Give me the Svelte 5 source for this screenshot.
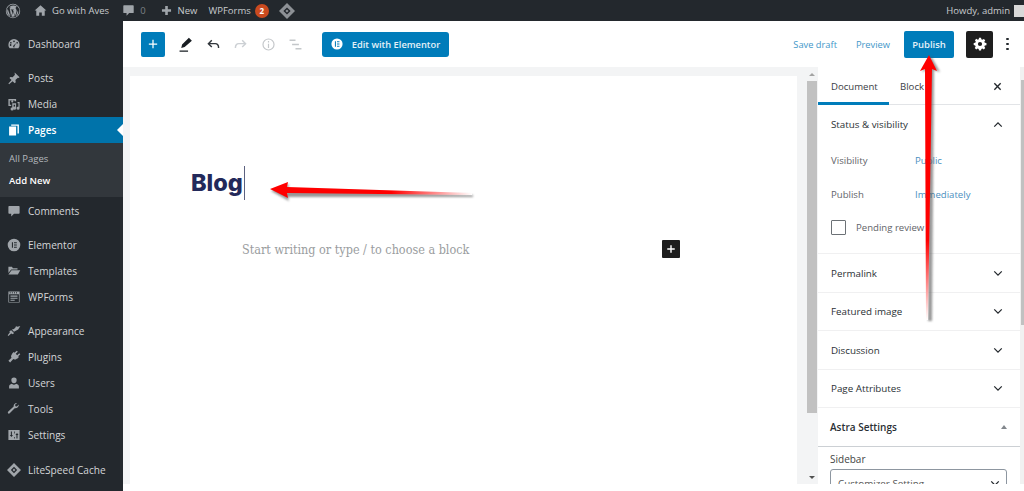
<script lang="ts">
    const groups = [
        [{ name: "Dashboard", icon: "dash" }],
        [
            { name: "Posts", icon: "pin" },
            { name: "Media", icon: "media" },
        ],
        [
            { name: "Comments", icon: "comment" },
        ],
        [
            { name: "Elementor", icon: "elementor" },
            { name: "Templates", icon: "folder" },
            { name: "WPForms", icon: "forms" },
        ],
        [
            { name: "Appearance", icon: "brush" },
            { name: "Plugins", icon: "plug" },
            { name: "Users", icon: "user" },
            { name: "Tools", icon: "wrench" },
            { name: "Settings", icon: "settings" },
        ],
        [{ name: "LiteSpeed Cache", icon: "diamond" }],
    ];

    const collapsed = [
        { name: "Permalink" },
        { name: "Featured image" },
        { name: "Discussion" },
        { name: "Page Attributes" },
    ];
</script>

{#snippet menuIcon(icon)}
    <svg class="menu-icon" viewBox="0 0 20 20" fill="#a0a5aa">
        {#if icon === "dash"}
            <path d="M10 3a8 8 0 0 0-8 8c0 2 .7 3.800 1.900 5.200h12.200A8 8 0 0 0 18 11a8 8 0 0 0-8-8zm0 2a1.200 1.200 0 1 1 0 2.400A1.200 1.200 0 0 1 10 5zM5.500 7a1.200 1.200 0 1 1 0 2.400 1.200 1.200 0 0 1 0-2.400zm9 0a1.200 1.200 0 1 1 0 2.400 1.200 1.200 0 0 1 0-2.400zM4 11.500a1.200 1.200 0 1 1 0 .01zm6.500 3.500a1.700 1.700 0 0 1-1.500-2.500l4-4-2.500 5a1.700 1.700 0 0 1 0 1.500z" />
        {:else if icon === "pin"}
            <path d="M11 2l7 7-1.500 1-1-.5-3.500 3.500.5 3-1.500 1.500-3-3-5 4.500-1-1 4.500-5-3-3L5 8.500l3 .5 3.500-3.500-.5-1z" />
        {:else if icon === "media"}
            <path d="M2 3h11v3h-2V5H4v6h2v2H2zM6 6.500a1.500 1.500 0 1 1 3 0 1.500 1.500 0 0 1-3 0zM15 7h3v9a2.200 2.200 0 1 1-1.600-2.100V9H15zM7.500 9H13v7a2.200 2.200 0 1 1-1.500-2.100V11h-2v6a2.200 2.200 0 1 1-2-2.100z" />
        {:else if icon === "comment"}
            <path d="M3 3h14a1 1 0 0 1 1 1v9a1 1 0 0 1-1 1h-7l-4 4v-4H3a1 1 0 0 1-1-1V4a1 1 0 0 1 1-1z" />
        {:else if icon === "elementor"}
            <path fill-rule="evenodd" d="M10 1a9 9 0 1 1 0 18 9 9 0 0 1 0-18zM7 6v8h1.500V6zm3 0v1.500h4V6zm0 3.300v1.500h4V9.300zm0 3.200V14h4v-1.500z" />
        {:else if icon === "folder"}
            <path d="M2 4h5l1.500 2H15v2H6L2 13zM6.500 9H19l-3.500 6H2z" />
        {:else if icon === "forms"}
            <path fill-rule="evenodd" d="M2 2h16v16H2zM3 6v11h14V6zM4 3v2h1V3zm3 0v2h1V3zm3 0v2h1V3zm3 0v2h1V3zM5 8h10v1.500H5zm0 3h10v1.500H5zm0 3h6v1.500H5z" />
        {:else if icon === "brush"}
            <path d="M19 3l-3 5-6 3-3-3 3-1 3-3-1-1 3 1zM6 9l4 4-1.500 1.500L6 13.500 2 17l-1-1 3-4-.5-1.500z" />
        {:else if icon === "plug"}
            <path d="M14 1l1.500 1.500-3 3 2 2 3-3L19 6l-3 3 1 1-2 2-1 .5c-2 1.500-4 1.500-5 .5l-4.500 5L2 15.500l4.500-4.500c-1-1-1-3 .5-5l.5-1 2-2 1 1z" />
        {:else if icon === "user"}
            <path d="M10 2a3.800 3.800 0 0 1 3.800 4c0 2.200-1.700 4.500-3.800 4.500S6.200 8.200 6.200 6A3.800 3.800 0 0 1 10 2zM3 15c0-2 1.500-3.500 4-4 1 1 2 1.500 3 1.500s2-.5 3-1.500c2.500.5 4 2 4 4v3H3z" />
        {:else if icon === "wrench"}
            <path d="M17 3.500l-3 3-2-.5-.5-2 3-2.500c-2.500-.5-5.500 1.500-5 5l-8 7.500c-1 1 .5 3.500 2 2.500L11 9c3 .5 6-2 6-5.500z" />
        {:else if icon === "settings"}
            <path fill-rule="evenodd" d="M2 3h16v14H2zM5.500 5v5H4l2.300 3 2.200-3H7V5zM13.500 15v-5H12l2.300-3 2.200 3H15v5zM10 13h1v2h-1zM10 5h1v3h-1z" />
        {:else if icon === "diamond"}
            <path fill-rule="evenodd" d="M10 0l10 10-10 10L0 10zM10 5.500L5.500 10l4.500 4.500 4.500-4.500z" />
            <path d="M10 8l2 2-2 2-2-2z" />
        {/if}
    </svg>
{/snippet}

{#snippet chevron(up)}
    <svg class="chevron" viewBox="0 0 12 8" fill="none" stroke="#23282d" stroke-width="1.500">
        {#if up}
            <path d="M1.500 6.500 6 2l4.500 4.500" />
        {:else}
            <path d="M1.500 1.500 6 6l4.500-4.500" />
        {/if}
    </svg>
{/snippet}

<div class="page">
    <header class="adminbar">
        <svg class="wp-logo" viewBox="0 0 20 20" fill="#a0a5aa">
            <path fill-rule="evenodd" d="M10 1a9 9 0 1 1 0 18 9 9 0 0 1 0-18zm0 1a8 8 0 1 0 0 16 8 8 0 0 0 0-16zM3.300 7.200l3.400 9.400a7.300 7.300 0 0 1-3.400-9.400zm12.600 1.800c.3.800.6 1.500.6 2.500 0 1-.5 2.300-1 3.200l-2 2.200 2-6c.4-1 .6-1.800.4-1.900zM5.200 5.200a7.300 7.300 0 0 1 9.900-.5c-1-.1-1.800.7-1.800 1.600 0 1 1.300 2.300 1.300 3.500 0 1-.5 2-1 3.500l-1 3-2.600-7.500.9-.1v-.7l-3.800.2v.6l.9.1 1.100 3.200-1.600 4.600L5.900 6.500l.9-.1v-.7zM10.200 11l2 5.700a7.300 7.300 0 0 1-4.100.1z" />
        </svg>
        <span class="bar-item site">
            <svg viewBox="0 0 20 20" fill="#a0a5aa"><path d="M10 2l9 8h-2.500v8h-4.500v-5H8v5H3.500v-8H1z" /></svg>
            Go with Aves
        </span>
        <span class="bar-item comments">
            <svg viewBox="0 0 20 20" fill="#a0a5aa"><path d="M3 2h14a1 1 0 0 1 1 1v10a1 1 0 0 1-1 1h-6l-4 4v-4H3a1 1 0 0 1-1-1V3a1 1 0 0 1 1-1z" /></svg>
            <span class="count">0</span>
        </span>
        <span class="bar-item new">
            <svg viewBox="0 0 20 20" fill="#a0a5aa"><path d="M8 3h4v5h5v4h-5v5H8v-5H3V8h5z" /></svg>
            New
        </span>
        <span class="bar-item forms">WPForms <span class="badge">2</span></span>
        <svg class="bar-diamond" viewBox="0 0 20 20" fill="#8d9196">
            <path fill-rule="evenodd" d="M10 0l10 10-10 10L0 10zM10 5.500L5.500 10l4.500 4.500 4.500-4.500z" />
            <path d="M10 8l2 2-2 2-2-2z" />
        </svg>
        <span class="howdy">Howdy, admin <span class="avatar"></span></span>
    </header>

    <div class="body">
        <nav class="sidebar">
            {#each groups as group, i}
                <ul class="menu-group">
                    {#each group as item}
                        <li class="menu-item">
                            {@render menuIcon(item.icon)}
                            <span>{item.name}</span>
                        </li>
                    {/each}
                    {#if i === 1}
                        <li class="menu-item current">
                            <svg class="menu-icon" viewBox="0 0 20 20" fill="#fff">
                                <path d="M6 2h11v13h-2V4H6zM3 5h10v13H3z" />
                            </svg>
                            <span>Pages</span>
                        </li>
                        <li class="submenu">
                            <span>All Pages</span>
                            <span class="active">Add New</span>
                        </li>
                    {/if}
                </ul>
            {/each}
        </nav>

        <main class="editor">
            <div class="toolbar">
                <div class="tools">
                    <button class="inserter" aria-label="Add block">
                        <svg viewBox="0 0 12 12" fill="none" stroke="#fff" stroke-width="1.500"><path d="M6 1v10M1 6h10" /></svg>
                    </button>
                    <svg class="tool" viewBox="0 0 20 20" fill="#191e23"><path d="M14 2l3.500 3.500L9 13l-4 1 1-4zM3 17h10v1.500H3z" /></svg>
                    <svg class="tool" viewBox="0 0 20 20" fill="none" stroke="#32373c" stroke-width="1.700"><path d="M8 5L4 9l4 4M4 9h8c2.500 0 4 1.500 4 5" /></svg>
                    <svg class="tool" viewBox="0 0 20 20" fill="none" stroke="#ccd0d4" stroke-width="1.700"><path d="M12 5l4 4-4 4M16 9H8c-2.500 0-4 1.500-4 5" /></svg>
                    <svg class="tool" viewBox="0 0 20 20" fill="none" stroke="#c4c7ca" stroke-width="1.400"><circle cx="10" cy="10" r="6.500" /><path d="M10 9v5M10 6v1.500" /></svg>
                    <svg class="tool" viewBox="0 0 20 20" fill="none" stroke="#c4c7ca" stroke-width="1.500"><path d="M3 5h7M6 10h8M10 15h7" /></svg>
                </div>
                <button class="elementor">
                    <svg viewBox="0 0 20 20" fill="#fff"><path fill-rule="evenodd" d="M10 2a8 8 0 1 1 0 16 8 8 0 0 1 0-16zM7 6v8h1.500V6zm3 0v1.500h3.500V6zm0 3.300v1.500h3.500V9.300zm0 3.200V14h3.500v-1.500z" /></svg>
                    Edit with Elementor
                </button>
                <div class="actions">
                    <span class="link save">Save draft</span>
                    <span class="link preview">Preview</span>
                    <button class="publish">Publish</button>
                    <button class="gear" aria-label="Settings">
                        <svg viewBox="0 0 20 20" fill="#fff"><path fill-rule="evenodd" d="M8.500 1h3l.4 2.300 1.500.7 2-1.300 2.100 2.100-1.300 2 .7 1.500 2.300.4v3l-2.300.4-.7 1.500 1.300 2-2.100 2.100-2-1.300-1.500.7-.4 2.300h-3l-.4-2.300-1.500-.7-2 1.300-2.100-2.100 1.300-2-.7-1.500L1 11.500v-3l2.300-.4.7-1.500-1.300-2 2.100-2.100 2 1.300 1.500-.7zM10 7a3 3 0 1 0 0 6 3 3 0 0 0 0-6z" /></svg>
                    </button>
                    <span class="dots"><i></i><i></i><i></i></span>
                </div>
            </div>

            <div class="workspace">
                <div class="canvas-wrap">
                    <div class="canvas">
                        <h1 class="title">Blog</h1>
                        <div class="block-row">
                            <span class="placeholder">Start writing or type / to choose a block</span>
                            <span class="add-block">
                                <svg viewBox="0 0 12 12" fill="none" stroke="#fff" stroke-width="1.700"><path d="M6 1.500v9M1.500 6h9" /></svg>
                            </span>
                        </div>
                    </div>
                    <div class="scrollbar">
                        <span class="arrow-up"></span>
                        <span class="thumb"></span>
                        <span class="arrow-down"></span>
                    </div>
                </div>

                <aside class="settings">
                    <div class="tabs">
                        <span class="tab on">Document</span>
                        <span class="tab">Block</span>
                        <svg class="close" viewBox="0 0 10 10" fill="none" stroke="#23282d" stroke-width="1.500"><path d="M1.500 1.500l7 7M8.500 1.500l-7 7" /></svg>
                    </div>
                    <section class="panel status">
                        <div class="panel-head">
                            <strong>Status &amp; visibility</strong>
                            {@render chevron(true)}
                        </div>
                        <div class="field"><span>Visibility</span><span class="value">Public</span></div>
                        <div class="field"><span>Publish</span><span class="value">Immediately</span></div>
                        <label class="check"><span class="box"></span>Pending review</label>
                    </section>
                    {#each collapsed as panel}
                        <section class="panel">
                            <div class="panel-head">
                                <strong>{panel.name}</strong>
                                {@render chevron(false)}
                            </div>
                        </section>
                    {/each}
                    <section class="astra">
                        <div class="panel-head astra-head">
                            <strong>Astra Settings</strong>
                            <span class="tri"></span>
                        </div>
                        <div class="astra-body">
                            <div class="astra-label">Sidebar</div>
                            <div class="select">
                                Customizer Setting
                                {@render chevron(false)}
                            </div>
                        </div>
                    </section>
                </aside>
                <div class="page-scroll"><span></span></div>
            </div>
        </main>
    </div>

    <!-- red annotation arrows -->
    <svg class="arrows" viewBox="0 0 1024 491">
        <defs>
            <linearGradient id="fade-h" gradientUnits="userSpaceOnUse" x1="270" y1="0" x2="472" y2="0">
                <stop offset="0.6" stop-color="#f00" />
                <stop offset="1" stop-color="#fff" />
            </linearGradient>
            <linearGradient id="fade-v" gradientUnits="userSpaceOnUse" x1="0" y1="55" x2="0" y2="320">
                <stop offset="0.7" stop-color="#f00" />
                <stop offset="1" stop-color="#fff" />
            </linearGradient>
            <filter id="soft" x="-20%" y="-20%" width="140%" height="140%">
                <feGaussianBlur stdDeviation="1.200" />
            </filter>
        </defs>
        <path d="M270 189 288 182 287 187 472 193 472 195 287 195 288 199z" fill="#555" opacity="0.6" filter="url(#soft)" transform="translate(1 2)" />
        <path d="M270 189 288 182 287 187 472 193 472 195 287 193 288 198z" fill="url(#fade-h)" />
        <path d="M929 55 938 71 932 69 930 320 926 320 925 69 920 71z" fill="#555" opacity="0.6" filter="url(#soft)" transform="translate(2 1)" />
        <path d="M929 55 937 71 932 69 928 320 926 320 925 69 920 71z" fill="url(#fade-v)" />
    </svg>
</div>

<style>
    :global(body) {
        margin: 0;
        background: #fff;
    }

    .page {
        position: relative;
        width: 1024px;
        height: 491px;
        overflow: hidden;
        display: flex;
        flex-direction: column;
        font-family: "Open Sans", "Noto Sans", sans-serif;
        font-size: 10.1px;
        color: #32373c;
    }

    .adminbar {
        height: 21px;
        flex: none;
        background: #23282d;
        color: #c8cbce;
        display: flex;
        align-items: center;
        font-size: 9.5px;
        padding-left: 5px;
    }

    .wp-logo {
        width: 16px;
        height: 16px;
        margin-right: 13px;
    }

    .bar-item {
        display: flex;
        align-items: center;
        gap: 5px;
    }

    .bar-item svg {
        width: 13px;
        height: 13px;
    }

    .site {
        margin-right: 13px;
    }

    .comments {
        margin-right: 14px;
    }

    .count {
        color: #7b8084;
    }

    .new {
        margin-right: 11px;
    }

    .forms {
        gap: 4px;
        margin-right: 10px;
    }

    .badge {
        width: 14px;
        height: 14px;
        border-radius: 50%;
        background: #ca4a1f;
        color: #fff;
        font-size: 8px;
        font-weight: 700;
        display: flex;
        align-items: center;
        justify-content: center;
    }

    .bar-diamond {
        width: 16px;
        height: 16px;
    }

    .howdy {
        margin-left: auto;
        display: flex;
        align-items: center;
        gap: 4px;
    }

    .avatar {
        width: 11px;
        height: 12px;
        margin-right: -1px;
        background: #d8d8d8;
    }

    .body {
        flex: 1;
        display: flex;
        min-height: 0;
    }

    .sidebar {
        width: 123px;
        flex: none;
        background: #23282d;
        padding-top: 10px;
        box-sizing: border-box;
    }

    .menu-group {
        list-style: none;
        margin: 0 0 8px;
        padding: 0;
    }

    .menu-group:nth-child(5) {
        margin-bottom: 9px;
    }

    .menu-item {
        height: 26px;
        display: flex;
        align-items: center;
        padding-left: 7px;
        gap: 7px;
        color: #d4d6d8;
        position: relative;
    }

    .menu-icon {
        width: 14px;
        height: 14px;
        flex: none;
    }

    .current {
        background: #0073aa;
        color: #fff;
        font-weight: 600;
    }

    .current::after {
        content: "";
        position: absolute;
        right: 0;
        top: 7px;
        border: 6px solid transparent;
        border-right-color: #fff;
        border-left: 0;
    }

    .submenu {
        background: #32373c;
        height: 54px;
        box-sizing: border-box;
        padding: 8px 0 0 9px;
        display: flex;
        flex-direction: column;
        gap: 6px;
        color: #b4b9be;
        font-size: 9.5px;
        line-height: 16px;
    }

    .submenu .active {
        color: #fff;
        font-weight: 600;
    }

    .menu-group:nth-child(2) {
        margin-bottom: 1px;
    }

    .editor {
        flex: 1;
        min-width: 0;
        display: flex;
        flex-direction: column;
    }

    .toolbar {
        height: 46px;
        flex: none;
        display: flex;
        align-items: center;
        padding-left: 18px;
        box-sizing: border-box;
    }

    .tools {
        display: flex;
        align-items: center;
    }

    button {
        font: inherit;
        border: 0;
        padding: 0;
        display: flex;
        align-items: center;
        justify-content: center;
    }

    .inserter {
        width: 24px;
        height: 25px;
        background: #007cba;
        border-radius: 2px;
        margin-right: 12px;
    }

    .inserter svg {
        width: 10px;
        height: 10px;
    }

    .tool {
        width: 17px;
        height: 17px;
        margin-right: 10.5px;
    }

    .elementor {
        width: 127px;
        height: 25px;
        margin-left: 7px;
        background: #007cba;
        border-radius: 3px;
        color: #e4f1f8;
        font-weight: 600;
        font-size: 9.3px;
        gap: 8px;
    }

    .elementor svg {
        width: 14px;
        height: 14px;
    }

    .actions {
        margin-left: auto;
        display: flex;
        align-items: center;
    }

    .link {
        color: #3f97c9;
        font-size: 9.3px;
    }

    .save {
        margin-right: 19px;
    }

    .preview {
        margin-right: 14px;
    }

    .publish {
        width: 50px;
        height: 27px;
        background: #007cba;
        color: #e4f1f8;
        border-radius: 2px;
        font-size: 9.5px;
        font-weight: 600;
        margin-right: 12px;
    }

    .gear {
        width: 27px;
        height: 27px;
        background: #1e1e1e;
        border-radius: 2px;
        margin-right: 13px;
    }

    .gear svg {
        width: 14px;
        height: 14px;
    }

    .dots {
        width: 3px;
        display: flex;
        flex-direction: column;
        gap: 2.5px;
        margin-right: 15px;
    }

    .dots i {
        width: 2.5px;
        height: 2.5px;
        background: #23282d;
        border-radius: 50%;
    }

    .workspace {
        flex: 1;
        min-height: 0;
        display: flex;
        background: #fff;
    }

    .canvas-wrap {
        width: 695px;
        flex: none;
        height: 417px;
        background: #f3f4f5;
        box-sizing: border-box;
        padding: 9px 0 0 7px;
        display: flex;
    }

    .canvas {
        width: 667px;
        background: #fff;
        padding: 90px 0 0 61px;
        box-sizing: border-box;
    }

    .title {
        margin: 0;
        font-family: "Inter", sans-serif;
        font-size: 23.5px;
        font-weight: 800;
        line-height: 34px;
        color: #23295a;
        display: inline-block;
        padding-right: 1px;
        border-right: 1px solid #5c6280;
    }

    .block-row {
        display: flex;
        align-items: center;
        margin: 40px 0 0 51px;
        width: 438px;
        height: 18px;
    }

    .placeholder {
        font-family: "DejaVu Serif", serif;
        font-stretch: condensed;
        font-size: 12.5px;
        color: #9a9da0;
    }

    .add-block {
        margin-left: auto;
        width: 18px;
        height: 18px;
        background: #1e1e1e;
        border-radius: 1px;
        display: flex;
        align-items: center;
        justify-content: center;
    }

    .add-block svg {
        width: 10px;
        height: 10px;
    }

    .scrollbar {
        width: 11px;
        margin-left: 9px;
        position: relative;
        display: flex;
        flex-direction: column;
        align-items: center;
        margin-top: -3px;
    }

    .thumb {
        width: 10px;
        height: 332px;
        margin-top: 5px;
        background: #c1c1c1;
    }

    .arrow-up,
    .arrow-down {
        width: 0;
        height: 0;
        border: 3px solid transparent;
        border-top: 0;
        border-bottom: 3px solid #a3a3a3;
    }

    .arrow-down {
        margin-top: auto;
        margin-bottom: 5px;
        transform: rotate(180deg);
        border-bottom-color: #505050;
    }

    .settings {
        width: 202px;
        flex: none;
        height: 417px;
        overflow: hidden;
        background: #fff;
    }

    .tabs {
        height: 38px;
        display: flex;
        align-items: center;
        position: relative;
        border-bottom: 1px solid #e2e4e7;
        box-sizing: border-box;
        font-size: 9.6px;
    }

    .tab {
        height: 38px;
        line-height: 40px;
        box-sizing: border-box;
        padding: 0 11px 0 13px;
        color: #3b4045;
        font-weight: 500;
    }

    .tab + .tab {
        padding-left: 11px;
    }

    .tab.on {
        width: 71px;
        border-bottom: 3px solid #007cba;
    }

    .close {
        position: absolute;
        right: 18px;
        top: 15px;
        width: 9px;
        height: 9px;
    }

    .panel {
        height: 38.5px;
        border-bottom: 1px solid #f0f0f1;
        box-sizing: border-box;
    }

    .status {
        height: 149px;
    }

    .panel-head {
        height: 38px;
        display: flex;
        align-items: center;
        justify-content: space-between;
        padding: 0 17px 0 13px;
    }

    .panel-head strong {
        font-weight: 500;
        font-size: 9.8px;
        color: #2a2f34;
    }

    .chevron {
        width: 10px;
        height: 7px;
    }

    .field {
        display: flex;
        height: 34px;
        align-items: center;
        padding-left: 13px;
        font-size: 9.6px;
        color: #5f6469;
    }

    .field > span:first-child {
        width: 84px;
    }

    .value {
        color: #4b8fc0;
    }

    .check {
        display: flex;
        align-items: center;
        gap: 10px;
        padding-left: 13px;
        font-size: 9.6px;
        color: #5f6469;
        margin-top: 9px;
    }

    .box {
        width: 13px;
        height: 13px;
        border: 1px solid #6c7176;
        border-radius: 1px;
        background: #fff;
    }

    .astra-head {
        padding-left: 12px;
        padding-right: 13px;
        border-bottom: 1px solid #ccd0d4;
    }

    .astra-head strong {
        font-weight: 600;
        font-size: 10px;
    }

    .tri {
        width: 0;
        height: 0;
        border: 3px solid transparent;
        border-top: 0;
        border-bottom: 4px solid #82878c;
    }

    .astra-body {
        padding: 5px 13px 0 12px;
    }

    .astra-label {
        font-size: 10px;
        color: #444;
        margin-bottom: 3px;
    }

    .select {
        height: 26px;
        border: 1px solid #8d96a0;
        border-radius: 3px;
        padding: 0 6px 0 7px;
        display: flex;
        align-items: center;
        justify-content: space-between;
        color: #555;
        font-size: 9.8px;
    }

    .page-scroll {
        flex: 1;
        height: 417px;
        background: #f1f1f1;
    }

    .page-scroll span {
        display: block;
        height: 245px;
        margin: 13px 0 0 1px;
        background: #c1c1c1;
    }

    .arrows {
        position: absolute;
        inset: 0;
        width: 1024px;
        height: 491px;
        pointer-events: none;
    }
</style>
